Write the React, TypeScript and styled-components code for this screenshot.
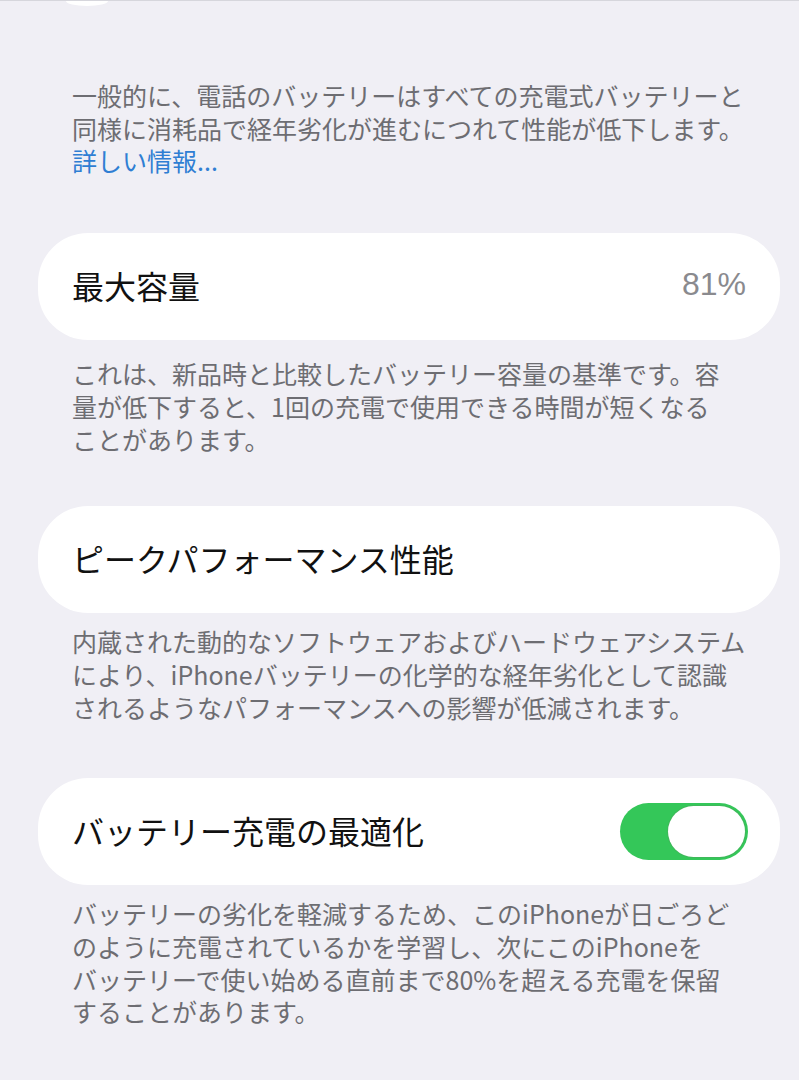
import React from "react";
import styled, { createGlobalStyle } from "styled-components";

const Global = createGlobalStyle`
  html, body { margin: 0; padding: 0; background: #f0eff5; }
  body { font-family: "Noto Sans CJK JP", "Noto Sans", sans-serif; -webkit-font-smoothing: antialiased; }
`;

const Page = styled.div`
  width: 799px;
  height: 1080px;
  overflow: hidden;
  background: #f0eff5;
  border-top: 1px solid #d6d6dc;
  box-sizing: border-box;
  display: flex;
  flex-direction: column;
`;

const TopEdge = styled.div`
  margin-left: 66px;
  width: 42px;
  height: 5px;
  background: #ffffff;
  border-radius: 0 0 21px 21px / 0 0 5px 5px;
`;

const Footer = styled.p<{ $top: number }>`
  margin: ${(p) => p.$top}px 0 0 0;
  padding: 0 40px 0 72px;
  font-size: 25px;
  line-height: 32.7px;
  color: #6d6d72;
  letter-spacing: 0;
`;

const Link = styled.span`
  color: #2f7ed3;
`;

const Card = styled.div<{ $top: number }>`
  margin: ${(p) => p.$top}px 19px 0 38px;
  height: 107px;
  flex-shrink: 0;
  background: #ffffff;
  border-radius: 50px;
  display: flex;
  align-items: center;
  justify-content: space-between;
  padding: 0 34px 4px 34px;
  box-sizing: border-box;
`;

const Title = styled.span`
  font-size: 32px;
  font-weight: 400;
  color: #111111;
  letter-spacing: 0;
`;

const Value = styled.span`
  font-size: 32px;
  color: #8a8a8e;
  font-family: "Liberation Sans", "Noto Sans", sans-serif;
`;

const Toggle = styled.div`
  width: 128px;
  height: 57px;
  margin-top: 4px;
  border-radius: 29px;
  background: #34c759;
  box-sizing: border-box;
  display: flex;
  justify-content: flex-end;
  padding: 3px;
  margin-right: -2px;
`;

const Knob = styled.div`
  width: 77px;
  height: 51px;
  border-radius: 26px;
  background: #ffffff;
  box-shadow: 0 0 0 1px #3fb85a;
`;

export default function App() {
  return (
    <Page>
      <Global />
      <TopEdge />
      <Footer $top={73}>
        一般的に、電話のバッテリーはすべての充電式バッテリーと<br />
        同様に消耗品で経年劣化が進むにつれて性能が低下します。<br />
        <Link>詳しい情報...</Link>
      </Footer>
      <Card $top={56}>
        <Title>最大容量</Title>
        <Value>81%</Value>
      </Card>
      <Footer $top={17}>
        これは、新品時と比較したバッテリー容量の基準です。容<br />
        量が低下すると、1回の充電で使用できる時間が短くなる<br />
        ことがあります。
      </Footer>
      <Card $top={51}>
        <Title>ピークパフォーマンス性能</Title>
      </Card>
      <Footer $top={12}>
        内蔵された動的なソフトウェアおよびハードウェアシステム<br />
        により、iPhoneバッテリーの化学的な経年劣化として認識<br />
        されるようなパフォーマンスへの影響が低減されます。
      </Footer>
      <Card $top={55}>
        <Title>バッテリー充電の最適化</Title>
        <Toggle>
          <Knob />
        </Toggle>
      </Card>
      <Footer $top={12}>
        バッテリーの劣化を軽減するため、このiPhoneが日ごろど<br />
        のように充電されているかを学習し、次にこのiPhoneを<br />
        バッテリーで使い始める直前まで80%を超える充電を保留<br />
        することがあります。
      </Footer>
    </Page>
  );
}
